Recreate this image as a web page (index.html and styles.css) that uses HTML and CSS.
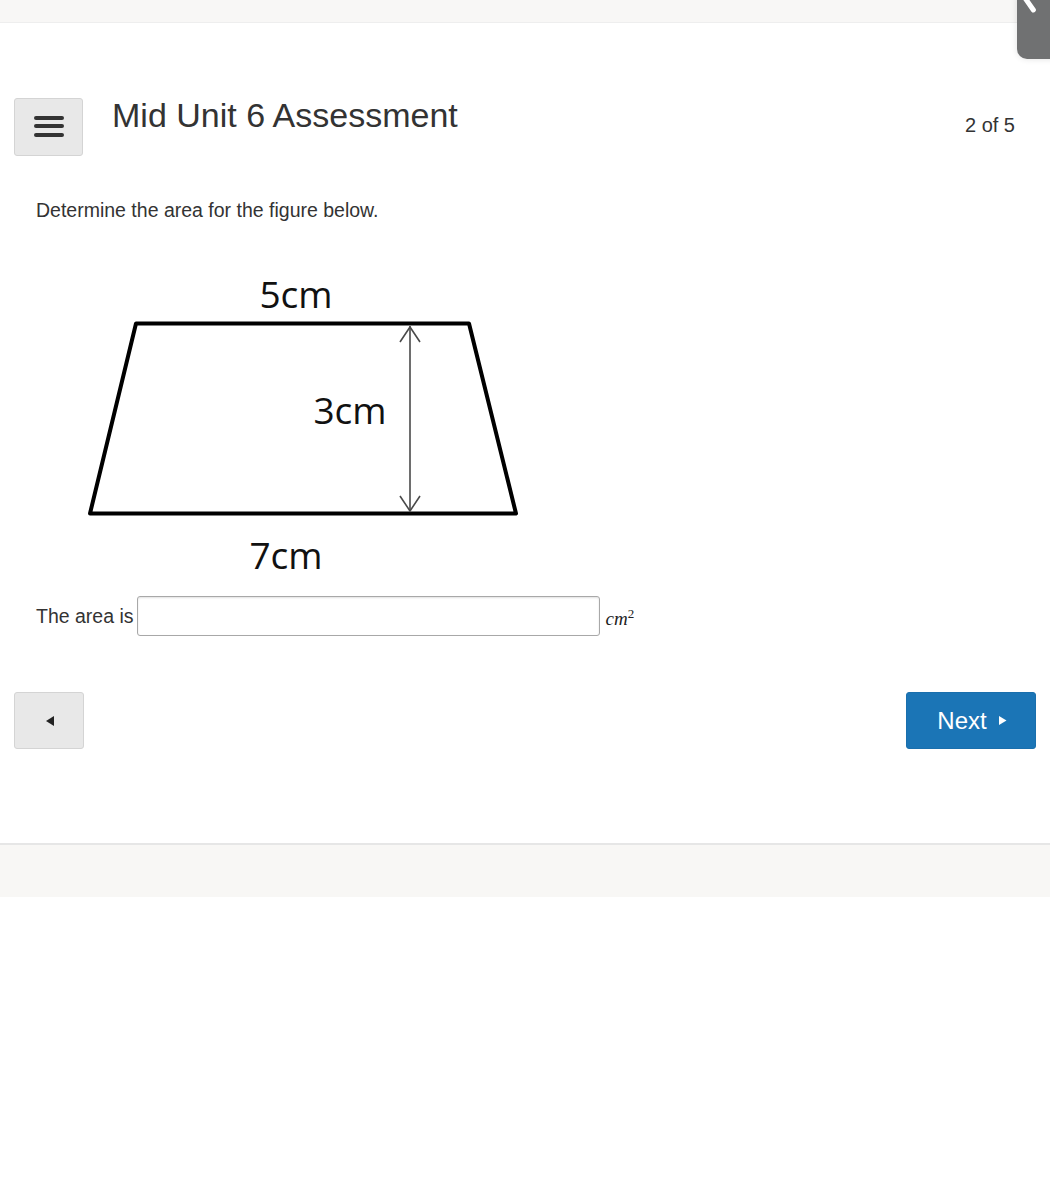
FILE: index.html
```html
<!DOCTYPE html>
<html lang="en">
<head>
<meta charset="utf-8">
<title>Mid Unit 6 Assessment</title>
<link rel="stylesheet" href="styles.css">
</head>
<body>
<div class="topbar"></div>
<div class="corner-tab"><span class="corner-stroke"></span></div>
<main class="main">
  <div class="header">
    <button class="menu-btn" aria-label="Menu">
      <span class="bar"></span><span class="bar"></span><span class="bar"></span>
    </button>
    <h1 class="title">Mid Unit 6 Assessment</h1>
    <div class="progress">2 of 5</div>
  </div>
  <p class="question">Determine the area for the figure below.</p>
  <div class="figure">
    <svg width="460" height="320" viewBox="0 0 460 320" xmlns="http://www.w3.org/2000/svg">
      <polygon points="56,57.5 389,57.5 436,247.5 10,247.5" fill="none" stroke="#000" stroke-width="4" stroke-linejoin="round"/>
      <line x1="330" y1="60" x2="330" y2="245" stroke="#4a4a4a" stroke-width="1.6"/>
      <polyline points="320,76 330,61 340,76" fill="none" stroke="#4a4a4a" stroke-width="1.6"/>
      <polyline points="320,230 330,245 340,230" fill="none" stroke="#4a4a4a" stroke-width="1.6"/>
      <text class="fig-label" x="216" y="42" text-anchor="middle">5cm</text>
      <text class="fig-label" x="270" y="158" text-anchor="middle">3cm</text>
      <text class="fig-label" x="206" y="303" text-anchor="middle">7cm</text>
    </svg>
  </div>
  <div class="answer-row">
    <span class="answer-label">The area is</span>
    <input class="answer-input" type="text" aria-label="Area">
    <span class="unit">cm<sup>2</sup></span>
  </div>
  <div class="nav">
    <button class="prev-btn" aria-label="Previous">
      <svg width="10" height="12" viewBox="0 0 10 12"><polygon points="9,1 9,11 1,6" fill="#222"/></svg>
    </button>
    <button class="next-btn">Next
      <svg class="next-tri" width="9" height="11" viewBox="0 0 9 11"><polygon points="1,1 1,10 8.5,5.5" fill="#fff"/></svg>
    </button>
  </div>
</main>
<footer class="footer"></footer>
</body>
</html>
```
FILE: styles.css
```css
html, body {
  margin: 0;
  padding: 0;
  background: #ffffff;
}
body {
  font-family: "Liberation Sans", Arial, Helvetica, sans-serif;
  color: #333333;
  position: relative;
}
.topbar {
  height: 22px;
  background: #f8f7f6;
  border-bottom: 1px solid #eeeeee;
}
.corner-tab {
  position: absolute;
  top: -12px;
  left: 1017px;
  width: 50px;
  height: 71px;
  background: #707172;
  border-radius: 10px;
  box-shadow: 0 0 6px rgba(0,0,0,0.12);
  overflow: hidden;
}
.corner-stroke {
  position: absolute;
  left: 9px;
  top: 4px;
  width: 5px;
  height: 22px;
  background: #ffffff;
  border-radius: 3px;
  transform: rotate(-35deg);
}
.main {
  padding: 72px 0 94px 0;
}
.header {
  display: flex;
  align-items: flex-start;
  padding: 0 35px 0 14px;
}
.menu-btn {
  margin-top: 3px;
  width: 69px;
  height: 58px;
  background: #e8e8e8;
  border: 1px solid #d4d4d4;
  border-radius: 3px;
  display: flex;
  flex-direction: column;
  align-items: center;
  justify-content: center;
  gap: 4.5px;
  padding: 0;
  padding-bottom: 2px;
}
.bar {
  display: block;
  width: 30px;
  height: 4px;
  background: #333333;
  border-radius: 2px;
}
.title {
  margin: 0 0 0 29px;
  font-weight: normal;
  font-size: 34px;
  line-height: 40px;
  color: #333333;
  flex: 1;
}
.progress {
  margin-top: 18px;
  font-size: 20px;
  line-height: 24px;
  color: #333333;
}
.question {
  margin: 40px 0 0 36px;
  font-size: 19.5px;
  line-height: 28px;
}
.figure {
  margin: 42px 0 0 80px;
  height: 320px;
}
.figure svg {
  display: block;
}
.fig-label {
  font-family: "Open Sans", "Liberation Sans", sans-serif;
  font-size: 37px;
  fill: #111111;
}
.answer-row {
  display: flex;
  align-items: center;
  margin: 10px 0 0 36px;
}
.answer-label {
  font-size: 19.5px;
  line-height: 28px;
  margin-right: 3px;
}
.answer-input {
  box-sizing: border-box;
  width: 463px;
  height: 40px;
  border: 1px solid #a8a8a8;
  border-radius: 3px;
  box-shadow: inset 0 1px 2px rgba(0,0,0,0.12);
  background: #ffffff;
  margin: 0;
  font-size: 18px;
}
.unit {
  margin-left: 6px;
  font-family: "Liberation Serif", "Times New Roman", serif;
  font-style: italic;
  font-size: 19px;
  color: #222222;
  position: relative;
  top: 2px;
}
.unit sup {
  font-style: normal;
  font-size: 13px;
}
.nav {
  display: flex;
  justify-content: space-between;
  margin-top: 56px;
  padding: 0 14px 0 14px;
}
.prev-btn {
  width: 70px;
  height: 57px;
  background: #e8e8e8;
  border: 1px solid #d4d4d4;
  border-radius: 3px;
  padding: 0;
  display: flex;
  align-items: center;
  justify-content: center;
}
.prev-btn svg {
  display: block;
  margin-left: 1px;
}
.next-btn {
  width: 130px;
  height: 57px;
  background: #1b75b6;
  border: 1px solid #1a6fad;
  border-radius: 3px;
  color: #ffffff;
  font-family: "Liberation Sans", Arial, sans-serif;
  font-size: 24px;
  display: flex;
  align-items: center;
  justify-content: center;
  gap: 11px;
  padding: 0 0 0 2px;
}
.next-tri {
  display: block;
}
.footer {
  height: 52px;
  background: #f8f7f5;
  border-top: 2px solid #e6e6e6;
}
```
